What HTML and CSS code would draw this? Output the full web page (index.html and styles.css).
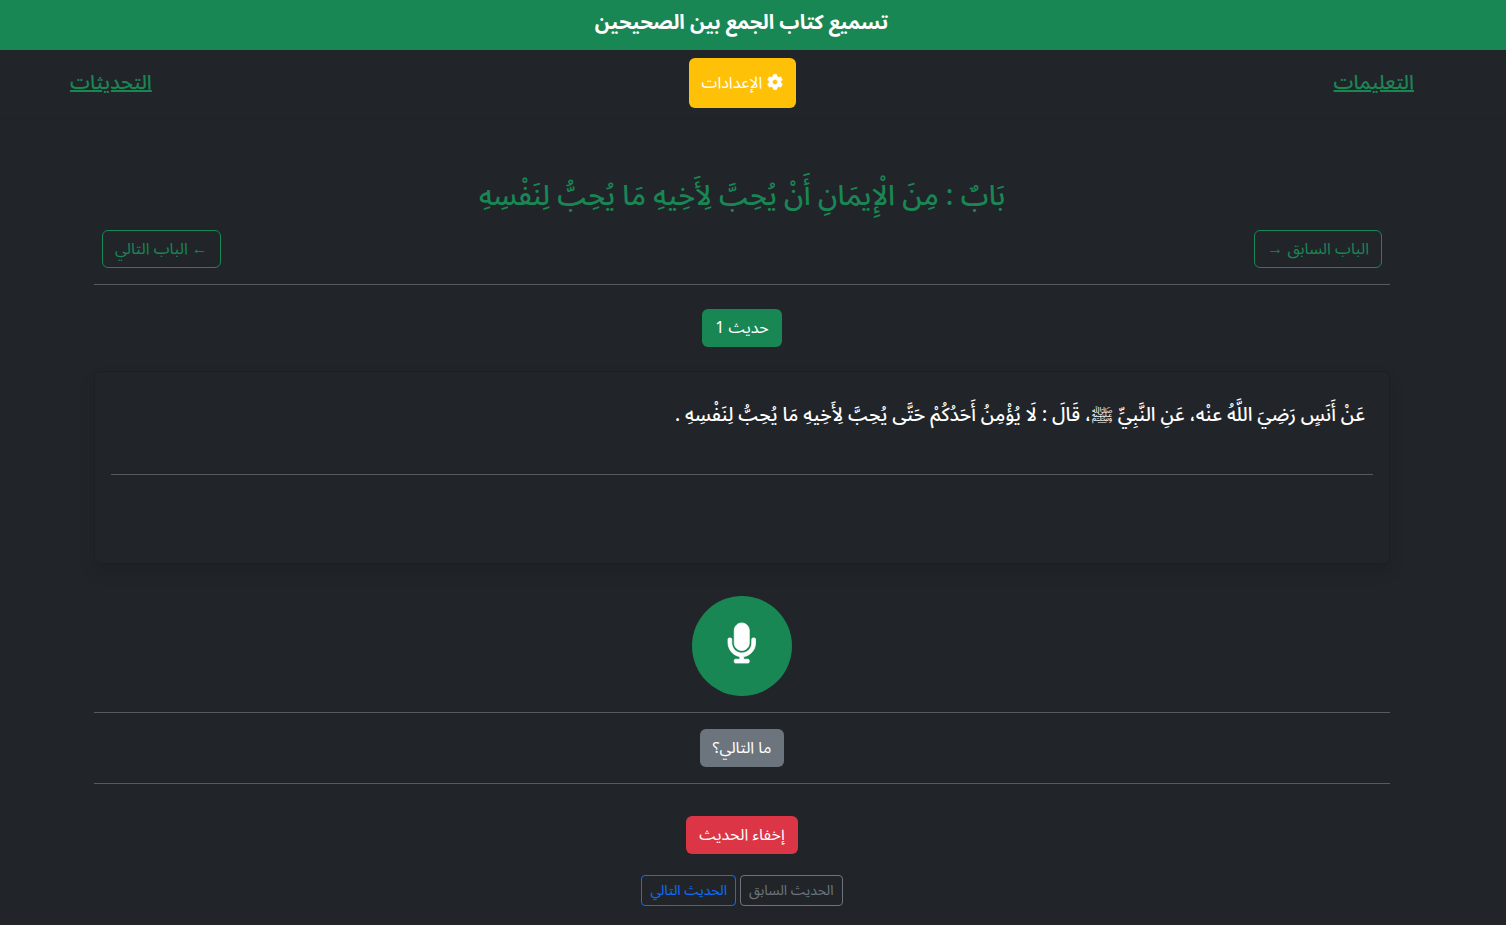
FILE: index.html
```html
<!DOCTYPE html>
<html lang="ar" dir="rtl">
<head>
<meta charset="utf-8">
<meta name="viewport" content="width=device-width, initial-scale=1">
<title>تسميع كتاب الجمع بين الصحيحين</title>
<link rel="stylesheet" href="styles.css">
</head>
<body>
<header class="banner"><h1>تسميع كتاب الجمع بين الصحيحين</h1></header>
<nav class="navbar">
  <a class="nav-link" href="#help">التعليمات</a>
  <button class="btn btn-settings" type="button"><svg class="gear" viewBox="0 0 512 512" aria-hidden="true"><path fill="currentColor" stroke="currentColor" stroke-width="10" d="M487.400 315.700l-42.600-24.600c4.300-23.200 4.300-47 0-70.200l42.600-24.600c4.900-2.800 7.100-8.600 5.500-14-11.100-35.600-30-67.800-54.700-94.600-3.800-4.100-10-5.100-14.800-2.300L380.800 110c-17.900-15.400-38.500-27.300-60.800-35.100V25.800c0-5.600-3.900-10.500-9.400-11.700-36.700-8.200-74.300-7.800-109.200 0-5.500 1.200-9.400 6.100-9.400 11.700V75c-22.200 7.900-42.800 19.800-60.800 35.100L88.700 85.500c-4.900-2.800-11-1.900-14.800 2.300-24.700 26.700-43.600 58.900-54.700 94.600-1.700 5.400.6 11.200 5.500 14L67.300 221c-4.300 23.200-4.300 47 0 70.200l-42.600 24.600c-4.900 2.800-7.100 8.600-5.500 14 11.100 35.600 30 67.800 54.700 94.600 3.800 4.100 10 5.100 14.800 2.300l42.600-24.600c17.900 15.400 38.500 27.300 60.800 35.100v49.200c0 5.600 3.900 10.500 9.400 11.700 36.700 8.200 74.300 7.800 109.200 0 5.500-1.200 9.400-6.100 9.400-11.700v-49.200c22.200-7.900 42.800-19.800 60.800-35.100l42.600 24.600c4.900 2.800 11 1.900 14.800-2.300 24.700-26.700 43.600-58.900 54.700-94.600 1.500-5.500-.7-11.300-5.600-14.100zM256 336c-44.100 0-80-35.900-80-80s35.900-80 80-80 80 35.900 80 80-35.900 80-80 80z"/></svg> الإعدادات</button>
  <a class="nav-link" href="#updates">التحديثات</a>
</nav>
<main class="container">
  <h2 class="chapter">بَابٌ : مِنَ الْإِيمَانِ أَنْ يُحِبَّ لِأَخِيهِ مَا يُحِبُّ لِنَفْسِهِ</h2>
  <div class="pager">
    <button class="btn btn-outline" type="button">الباب السابق <span class="arrow">→</span></button>
    <button class="btn btn-outline" type="button"><span class="arrow">←</span> الباب التالي</button>
  </div>
  <hr>
  <div class="row row-number"><button class="btn btn-green" type="button">حديث 1</button></div>
  <section class="card">
    <p class="hadith">عَنْ أَنَسٍ رَضِيَ اللَّهُ عنْه، عَنِ النَّبِيِّ ﷺ، قَالَ : لَا يُؤْمِنُ أَحَدُكُمْ حَتَّى يُحِبَّ لِأَخِيهِ مَا يُحِبُّ لِنَفْسِهِ .</p>
    <hr>
  </section>
  <div class="row"><button class="mic" type="button" aria-label="تسجيل"><svg viewBox="0 0 352 512" aria-hidden="true"><path fill="currentColor" stroke="currentColor" stroke-width="10" d="M176 352c53 0 96-43 96-96V96c0-53-43-96-96-96S80 43 80 96v160c0 53 43 96 96 96zm160-160h-16c-8.800 0-16 7.200-16 16v48c0 74.800-64.500 134.800-140.800 127.400C96.700 376.900 48 317.100 48 250.300V208c0-8.800-7.200-16-16-16H16c-8.800 0-16 7.200-16 16v40.200c0 89.600 64 169.500 152 181.700V464H96c-8.800 0-16 7.200-16 16v16c0 8.800 7.200 16 16 16h160c8.800 0 16-7.200 16-16v-16c0-8.800-7.200-16-16-16h-56v-33.800C285.700 418.500 352 344.900 352 256v-48c0-8.800-7.200-16-16-16z"/></svg></button></div>
  <hr>
  <div class="row"><button class="btn btn-gray" type="button">ما التالي؟</button></div>
  <hr>
  <div class="row row-hide"><button class="btn btn-red" type="button">إخفاء الحديث</button></div>
  <div class="row row-small">
    <button class="btn btn-small btn-prev" type="button">الحديث السابق</button>
    <button class="btn btn-small btn-next" type="button">الحديث التالي</button>
  </div>
</main>
</body>
</html>
```
FILE: styles.css
```css
* { box-sizing: border-box; }
body {
  margin: 0;
  background: #212529;
  color: #fff;
  font: 16px/24px "Noto Sans", "Noto Sans Arabic", "DejaVu Sans", sans-serif;
}
.banner { background: #198754; min-height: 50px; padding: 10px 23px 0 0; text-align: center; }
h1 { margin: 0; font-size: 20px; line-height: 24px; font-weight: 700; }
.navbar {
  display: grid;
  grid-template-columns: 1fr auto 1fr;
  align-items: center;
  padding: 8px 92px 10px 70px;
  border-bottom: 1px solid #1e2226;
}
.nav-link { padding-bottom: 2px; color: #198754; font-size: 20px; line-height: 30px; font-weight: 500; }
.nav-link:last-child { justify-self: end; }
.btn {
  border: 1px solid transparent;
  border-radius: 6px;
  padding: 5px 12px 7px;
  font: inherit;
  color: #fff;
  background: transparent;
}
.btn-settings { background: #ffc107; min-height: 50px; }
.gear { width: 16px; height: 16px; vertical-align: -2px; overflow: visible; }
.container { padding: 55px 116px 0 94px; }
.chapter { margin: 0; font-size: 28px; line-height: 40px; font-weight: 500; color: #198754; text-align: center; }
.pager { display: flex; justify-content: space-between; padding: 16px 8px 0; }
.btn-outline { border-color: #198754; color: #198754; }
.arrow { font-family: "Liberation Serif", serif; line-height: 16px; }
hr { width: 100%; margin: 16px 0; border: 0; border-top: 1px solid #585b5e; }
.row { display: flex; justify-content: center; gap: 4px; }
.row-number { margin: 24px 0; }
.btn-green { background: #198754; }
.card {
  min-height: 193px;
  padding: 16px;
  margin-bottom: 32px;
  border: 1px solid #1c1f23;
  border-radius: 6px;
  box-shadow: 0 8px 16px rgba(0, 0, 0, 0.12);
}
.hadith { margin: 0; padding: 8px; font-size: 19px; line-height: 36px; font-weight: 550; }
.card hr { margin: 34px 0 0; }
.mic { width: 100px; height: 100px; padding: 0 0 6px; border: 0; border-radius: 50%; background: #198754; color: #fff; }
.mic svg { display: block; height: 40px; margin: 0 auto; overflow: visible; }
.btn-gray { background: #6c757d; }
.row-hide { margin-top: 32px; }
.btn-red { background: #dc3545; }
.row-small { margin-top: 21px; }
.btn-small { border-radius: 4px; padding: 3px 8px 5px; font-size: 14px; line-height: 21px; }
.btn-prev { border-color: #6c757d; color: #6c757d; }
.btn-next { border-color: #0d6efd; color: #0d6efd; }
```
